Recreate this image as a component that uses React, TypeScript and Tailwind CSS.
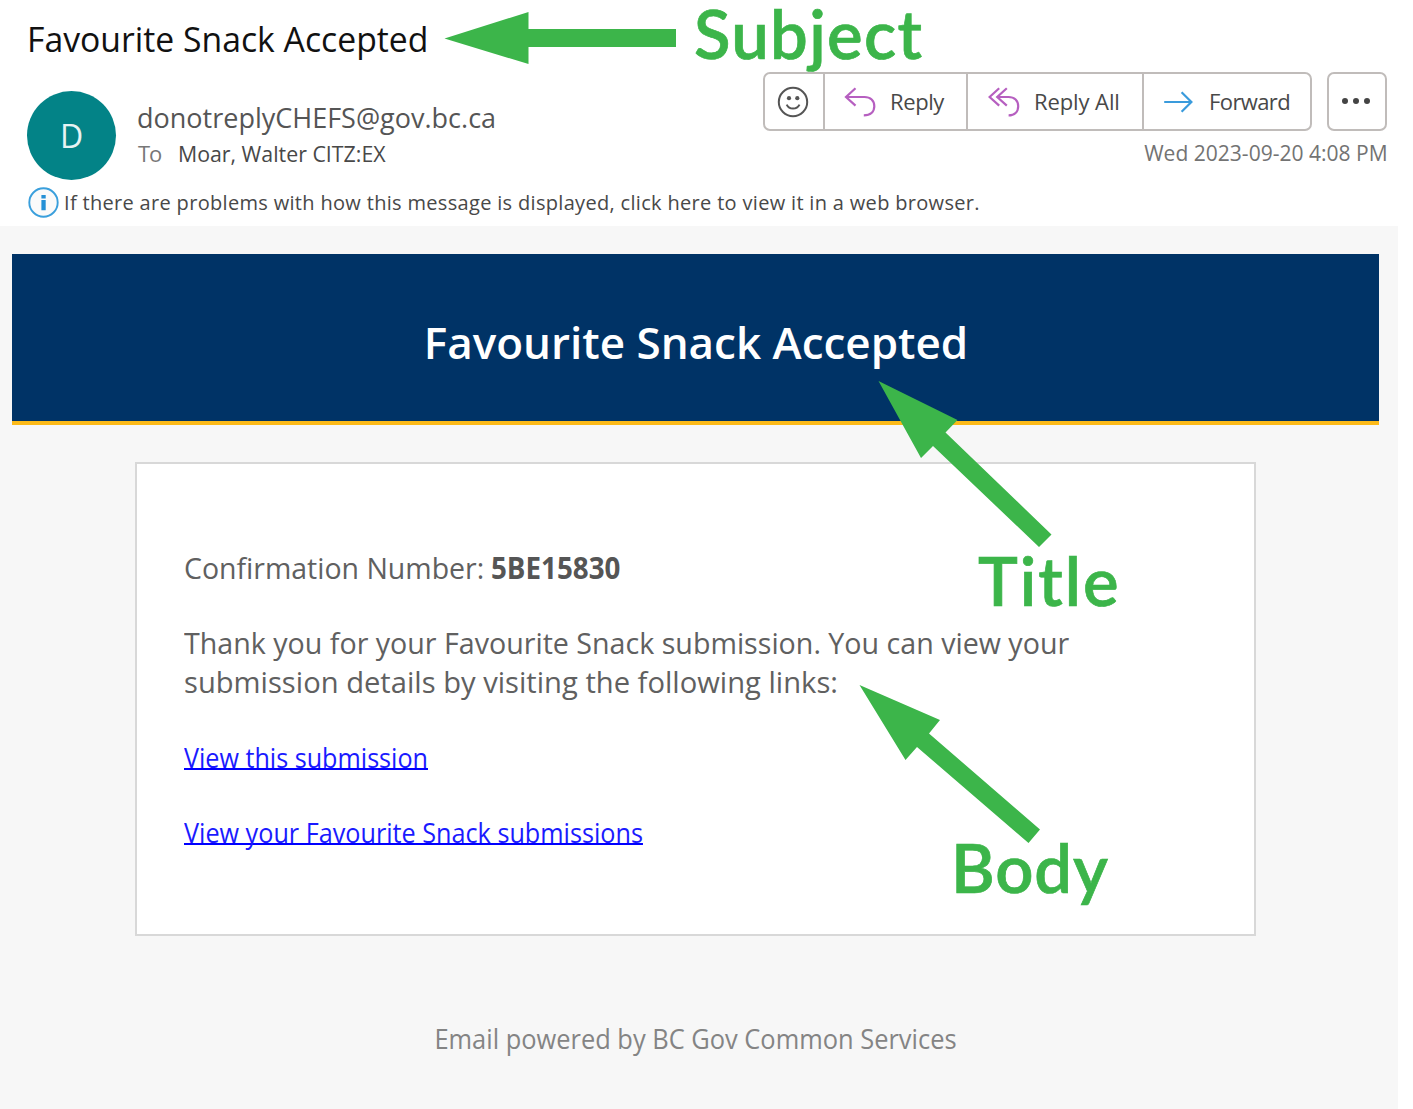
import type { ReactNode } from "react";

function SmileyIcon() {
  return (
    <svg width="32" height="32" viewBox="0 0 32 32" fill="none" stroke="#555" strokeWidth="2">
      <circle cx="16" cy="16" r="14.2" />
      <circle cx="12" cy="12.2" r="2.1" fill="#555" stroke="none" />
      <circle cx="20.3" cy="12.2" r="2.1" fill="#555" stroke="none" />
      <path d="M9.7 18.6Q11.6 22.6 16 22.6T22.5 18.6" />
    </svg>
  );
}

function ReplyIcon() {
  return (
    <svg width="32" height="30" viewBox="0 0 32 30" fill="none" stroke="#b65fc0" strokeWidth="2.2">
      <path d="M11.5 1.2 2 10 11.5 18.6M2 10H20.5C26.5 10 30.3 13.8 30.3 19.2C30.3 24.8 26.5 28.4 19.8 28.4" />
    </svg>
  );
}

function ReplyAllIcon() {
  return (
    <svg width="32" height="30" viewBox="0 0 32 30" fill="none" stroke="#b65fc0" strokeWidth="2.2">
      <path d="M11.2 1.2 1.6 10 11.2 18.6M18.8 1.2 9.2 10 18.8 18.6M9.2 10H20.5C26.5 10 30.2 13.8 30.2 19.2C30.2 24.8 26.5 28.4 20.6 28.4" />
    </svg>
  );
}

function ForwardIcon() {
  return (
    <svg width="30" height="22" viewBox="0 0 30 22" fill="none" stroke="#3a9bdc" strokeWidth="2.2">
      <path d="M0.2 11H27M17.6 1.2 27.4 11 17.6 20.8" />
    </svg>
  );
}

function InfoIcon() {
  return (
    <svg width="31" height="31" viewBox="0 0 31 31">
      <circle cx="15.5" cy="15.5" r="14.2" fill="#fafafa" stroke="#3a9fdc" strokeWidth="1.9" />
      <path d="M13.4 8h4.3v3.4h-4.3zM13.4 13h4.3v10.2h-4.3z" fill="#2490d6" />
    </svg>
  );
}

function Annotation({ className, children }: { className: string; children: ReactNode }) {
  return (
    <div className={`absolute whitespace-nowrap font-['Lato',sans-serif] text-[67px] leading-[66px] font-semibold text-[#3cb54a] [-webkit-text-stroke:0.7px_#3cb54a] ${className}`}>
      {children}
    </div>
  );
}

function Header() {
  return (
    <header className="flex h-[226px] justify-between pr-[26px] pl-[27px]">
      <div className="flex flex-col pt-[19px] whitespace-nowrap">
        <h1 className="h-10 w-max origin-left scale-x-[0.992] text-[34px] leading-10 text-[#111]">Favourite Snack Accepted</h1>
        <div className="mt-[32px] flex gap-[21px]">
          <div className="flex size-[89px] items-center justify-center rounded-full bg-[#038387] text-[32px] leading-none text-[#e6f3f3]">D</div>
          <div className="pt-[9px]">
            <div className="w-max text-[27px] leading-9 text-[#555]">donotreplyCHEFS@gov.bc.ca</div>
            <div className="mt-[3px] flex text-[22px] leading-7">
              <span className="w-[39px] pl-px tracking-[-1px] text-[#777]">To</span>
              <span className="origin-left scale-x-[0.97] pl-[2px] text-[#484848]">Moar, Walter CITZ:EX</span>
            </div>
          </div>
        </div>
        <div className="mt-[7px] flex items-center gap-[5px] pl-px">
          <InfoIcon />
          <p className="text-[20px] leading-[31px] tracking-[0.32px] text-[#484848]">
            If there are problems with how this message is displayed, click here to view it in a web browser.
          </p>
        </div>
      </div>
      <div className="-ml-[300px] flex flex-col items-end pt-[72px] whitespace-nowrap">
        <div className="flex gap-[15px] text-[22px] text-[#484848]">
          <div className="flex h-[59px] divide-x-2 divide-[#c0bcba] rounded-[7px] border-2 border-[#c0bcba]">
            <button className="flex w-[60px] items-center justify-center pr-[2px]"><SmileyIcon /></button>
            <button className="flex w-[143px] items-center gap-[14px] pl-[19px]">
              <ReplyIcon /><span className="tracking-[-0.4px]">Reply</span>
            </button>
            <button className="flex w-[176px] items-center gap-[14px] pl-[20px]">
              <ReplyAllIcon /><span className="tracking-[-0.1px]">Reply All</span>
            </button>
            <button className="flex w-[166px] items-center gap-[15px] pl-[20px]">
              <ForwardIcon /><span className="tracking-[-0.6px]">Forward</span>
            </button>
          </div>
          <button className="flex h-[59px] w-[60px] items-center justify-center gap-[5px] rounded-[7px] border-2 border-[#c0bcba] pr-[2px] pb-[2px]">
            <span className="size-[6px] rounded-full bg-[#444]" />
            <span className="size-[6px] rounded-full bg-[#444]" />
            <span className="size-[6px] rounded-full bg-[#444]" />
          </button>
        </div>
        <div className="mt-[7px] origin-right translate-x-px scale-x-[0.956] text-[22px] leading-7 text-[#737373]">Wed 2023-09-20 4:08 PM</div>
      </div>
    </header>
  );
}

function Message() {
  return (
    <main className="flex h-[883px] w-[1398px] flex-col bg-[#f7f7f7] pt-[28px] pl-[12px] whitespace-nowrap">
      <div className="flex h-[171px] w-[1367px] items-center justify-center border-b-4 border-[#fcba19] bg-[#003366] pt-[9px] pl-px">
        <h2 className="text-[44px] leading-[60px] font-semibold text-white">Favourite Snack Accepted</h2>
      </div>
      <section className="mt-[37px] ml-[123px] h-[474px] w-[1121px] border-2 border-[#d8d8d8] bg-white pt-[84px] pl-[47px] text-[30px] leading-[39px] text-[#606060]">
        <p className="flex">
          <span className="w-[307px]"><span className="inline-block origin-left scale-x-[0.949]">Confirmation Number:</span></span>
          <b className="origin-left scale-x-[0.925] text-[#555]">5BE15830</b>
        </p>
        <p className="mt-[36px]">
          <span className="block w-max origin-left scale-x-[0.954]">Thank you for your Favourite Snack submission. You can view your</span>
          <span className="block w-max origin-left scale-x-[0.972]">submission details by visiting the following links:</span>
        </p>
        <div className="mt-[37px] flex flex-col items-start gap-[36px] text-[28px] text-[#1a1aff]">
          <a className="origin-left scale-x-[0.898] underline decoration-[#0000ff] decoration-2 underline-offset-0 [text-decoration-skip-ink:none]">View this submission</a>
          <a className="origin-left scale-x-[0.9] underline decoration-[#0000ff] decoration-2 underline-offset-0 [text-decoration-skip-ink:none]">View your Favourite Snack submissions</a>
        </div>
      </section>
      <footer className="mt-[82px] w-[1367px] text-center text-[28px] leading-10 text-[#848484]">
        <span className="inline-block scale-x-[0.908]">Email powered by BC Gov Common Services</span>
      </footer>
    </main>
  );
}

export default function App() {
  return (
    <div className="relative h-[1109px] w-[1413px] bg-white font-['Open_Sans',sans-serif]">
      <Header />
      <Message />
      <svg className="pointer-events-none absolute inset-0" width="1413" height="1109" fill="#3cb54a">
        <polygon points="444.5,38.5 528.5,12 528.5,29 676,29 676,47 528.5,47 528.5,64" />
        <polygon points="878.5,381 957.5,420 945.5,432.5 1051.5,534.5 1039,547 933,446 921,458" />
        <polygon points="859.5,685 940,720 929,733.5 1040,829.5 1028.5,843 917,747 905.5,760" />
      </svg>
      <Annotation className="top-0 left-[694px] tracking-[1.3px]">Subject</Annotation>
      <Annotation className="top-[547px] left-[978px] tracking-[2px]">Title</Annotation>
      <Annotation className="top-[834px] left-[951px] tracking-[0.9px]">Body</Annotation>
    </div>
  );
}
